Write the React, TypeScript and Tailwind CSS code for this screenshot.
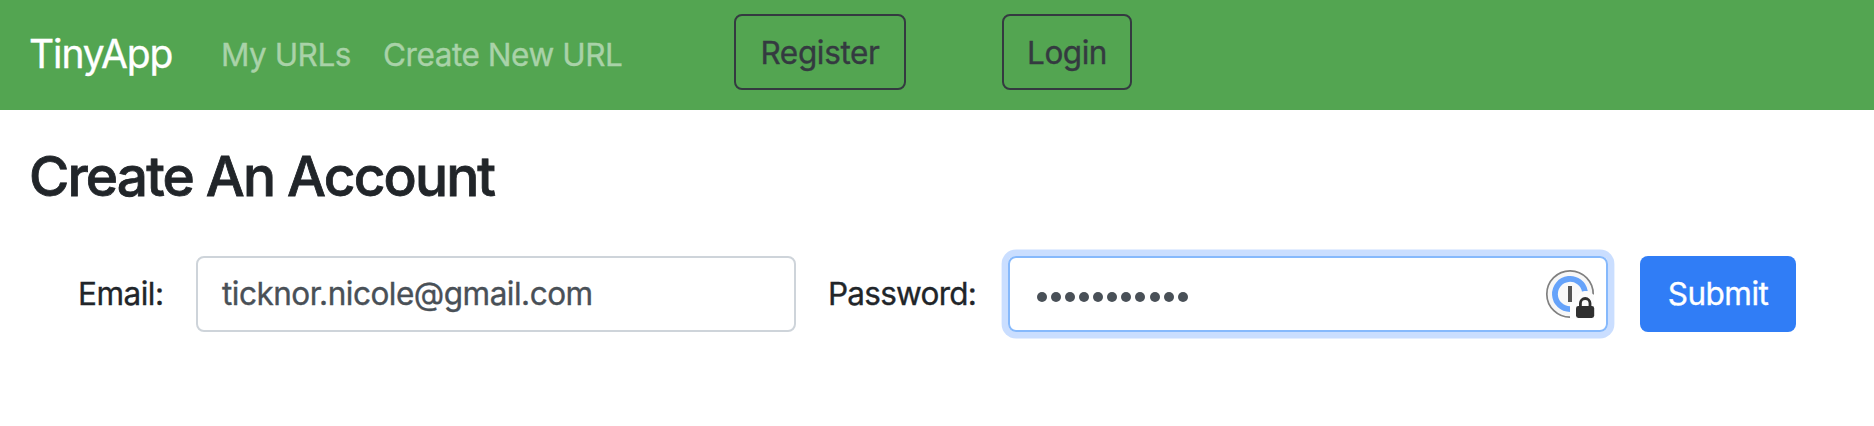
import React from "react";

function OnePasswordIcon() {
  return (
    <svg width="50" height="50" viewBox="0 0 50 50" fill="none" aria-hidden="true">
      <circle cx="25" cy="25" r="23.2" fill="#f7f7f7" />
      <path d="M48.2 25.6A23.2 23.2 0 1 0 25.6 48.2" stroke="#808080" strokeWidth="1.7" />
      <circle cx="25" cy="25" r="12.2" fill="#f9f9f9" />
      <path d="M39.9 22.4A15.1 15.1 0 1 0 25 40.1" stroke="#66a3fa" strokeWidth="5.8" />
      <rect x="23" y="17" width="4" height="16" fill="#555" />
      <path d="M25 50V34Q27 33 31 33Q32 22 40 22Q46 22 49 27V50Z" fill="#fcfcfc" />
      <path d="M35.4 38v-3.7a4.8 4.8 0 0 1 9.6 0V38" stroke="#2f2f2f" strokeWidth="2.8" />
      <rect x="31" y="37" width="18.2" height="12" rx="2.4" fill="#2f2f2f" />
    </svg>
  );
}

function NavBar() {
  return (
    <nav className="flex h-[110px] items-start bg-[#53a551] pl-[29px]">
      <a className="mt-[24px] w-[192px] text-[39px] leading-[60px] tracking-[-1.1px] text-white">TinyApp</a>
      <a className="mt-[31px] w-[162px] text-[31.5px] leading-[48px] tracking-[-0.5px] text-[#a9d2a8]">My URLs</a>
      <a className="mt-[31px] w-[351px] text-[31.5px] leading-[48px] tracking-[-0.45px] text-[#a9d2a8]">Create New URL</a>
      <button className="mt-[14px] h-[76px] w-[172px] rounded-[8px] border-2 border-[#343a40] pt-[2px] text-[31.5px] tracking-[-0.35px] text-[#343a40]">
        Register
      </button>
      <button className="mt-[14px] ml-24 h-[76px] w-[130px] rounded-[8px] border-2 border-[#343a40] pt-[2px] text-[31.5px] tracking-[-0.5px] text-[#343a40]">
        Login
      </button>
    </nav>
  );
}

export default function App() {
  return (
    <div className="h-[426px] overflow-hidden bg-white font-['Inter',sans-serif] whitespace-nowrap text-[#212529] [-webkit-text-stroke-width:0.35px]">
      <NavBar />
      <h3 className="mt-[33px] pl-[29px] text-[55px] leading-[67px] font-medium tracking-[-1.85px] [-webkit-text-stroke-width:0.8px]">Create An Account</h3>
      <form className="mt-[46px] flex h-[76px] items-center text-[31.5px] tracking-[-0.5px]">
        <label className="w-[118px] shrink-0 pl-[78px] box-content">Email:</label>
        <div className="flex h-[76px] w-[600px] shrink-0 items-center rounded-[8px] border-2 border-[#ced4da] pl-6 text-[#495057]">
          ticknor.nicole@gmail.com
        </div>
        <label className="w-[180px] shrink-0 pl-8 box-content tracking-[-0.75px]">Password:</label>
        <div className="flex h-[76px] w-[600px] shrink-0 items-center rounded-[8px] border-2 border-[#86b9fc] pr-[11px] pl-[27px] shadow-[0_0_0_6.4px_#cadeff]">
          <div className="mt-[6px] flex gap-[4.07px]">
            {Array.from({ length: 11 }, (_, i) => (
              <span key={i} className="size-[10px] rounded-full bg-[#495057]" />
            ))}
          </div>
          <div className="ml-auto">
            <OnePasswordIcon />
          </div>
        </div>
        <button className="ml-8 h-[76px] w-[156px] shrink-0 rounded-[8px] bg-[#307df6] text-white">Submit</button>
      </form>
    </div>
  );
}
